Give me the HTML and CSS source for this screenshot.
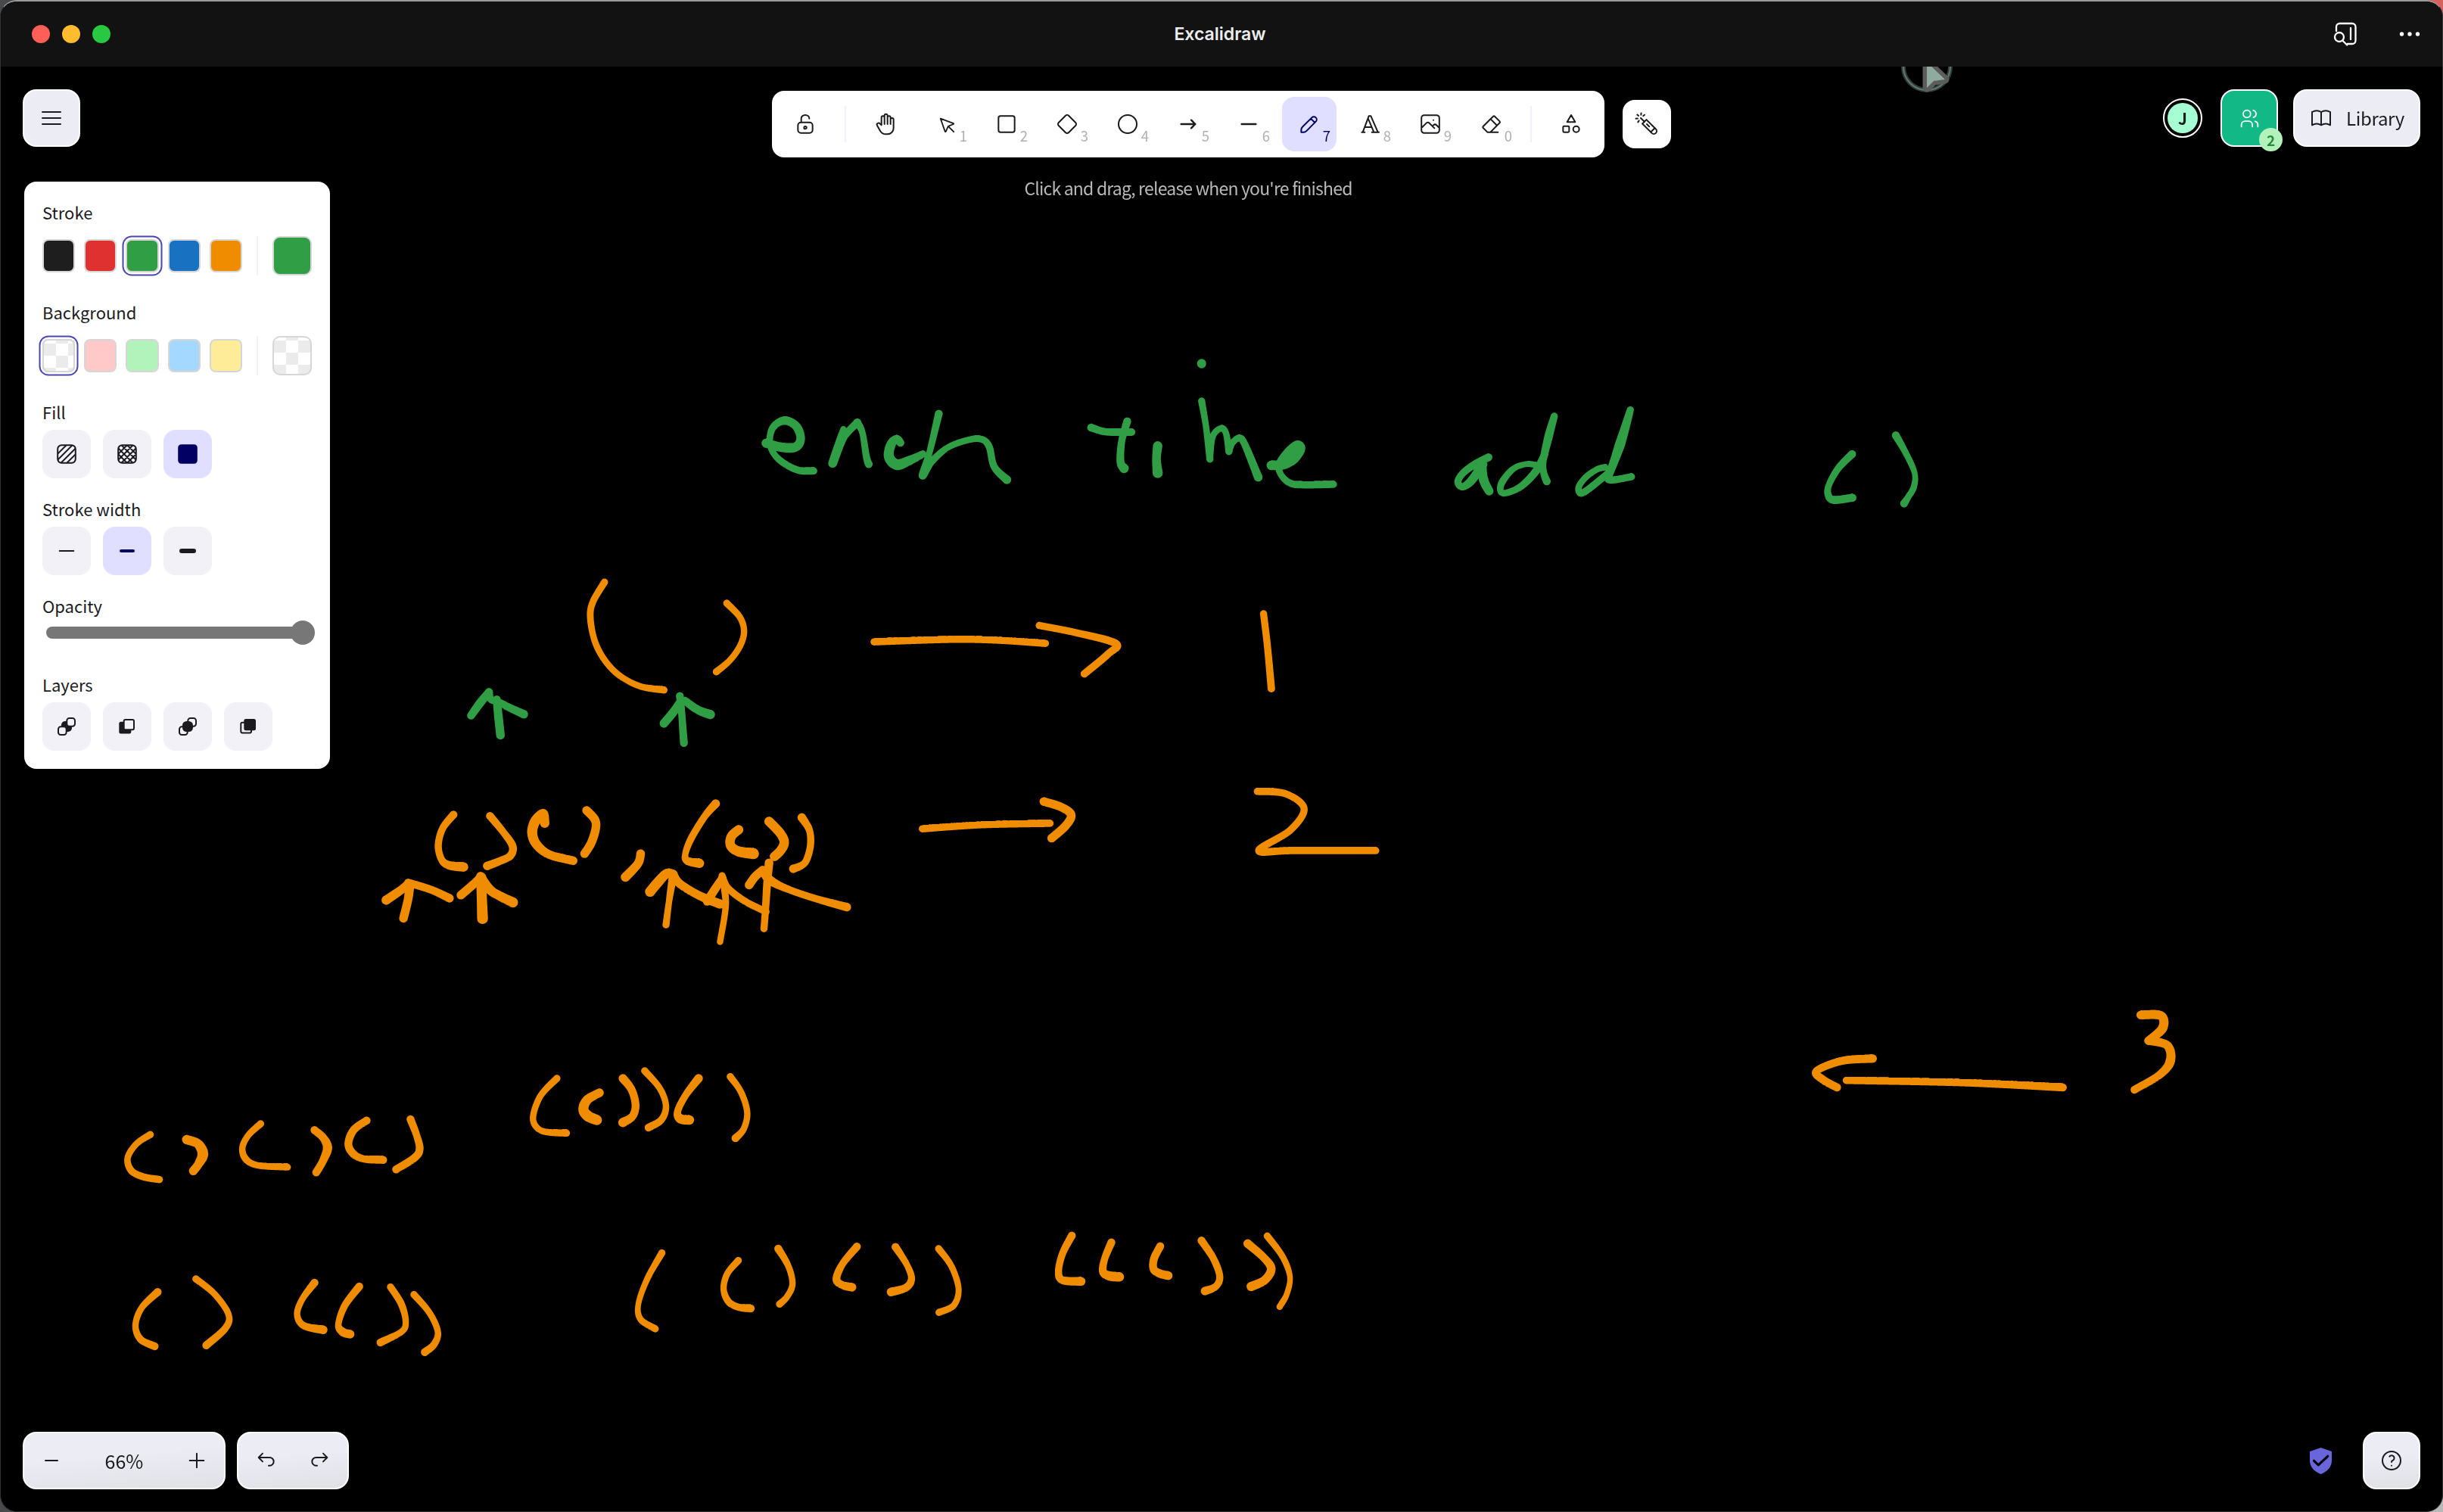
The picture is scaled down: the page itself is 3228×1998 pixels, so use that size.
FILE: index.html
```html
<!DOCTYPE html>
<html lang="en">
<head>
<meta charset="utf-8">
<title>Excalidraw</title>
<link rel="stylesheet" href="styles.css">
</head>
<body>
<div class="window">
  <header class="titlebar">
    <div class="lights"><span class="light light-close"></span><span class="light light-min"></span><span class="light light-max"></span></div>
    <div class="window-title">Excalidraw</div>
    <div class="titlebar-actions">
      <svg class="action-find" viewBox="0 0 34 34"><path d="M5 13V7.500a4.500 4.500 0 0 1 4.500-4.500H26a4.500 4.500 0 0 1 4.500 4.500v18A4.500 4.500 0 0 1 26 30h-6.500M24 9v15"/><circle cx="9" cy="21" r="6"/><path d="M13.200 25.500l6 6"/></svg>
      <svg class="action-more" viewBox="0 0 28 8"><circle cx="3.500" cy="4" r="2.700"/><circle cx="14" cy="4" r="2.700"/><circle cx="24.500" cy="4" r="2.700"/></svg>
    </div>
  </header>

  <main class="stage">
    <canvas class="board" id="board" width="3228" height="1910"></canvas>

    <div class="top">
      <div class="side-left">
        <button class="pill menu-button"><svg class="icon" viewBox="0 0 20 20"><path d="M2.500 5h15M2.500 10h15M2.500 15h15"/></svg></button>
        <section class="panel">
          <div class="field">
            <h3>Stroke</h3>
            <div class="swatches">
              <span class="swatch c-black"></span><span class="swatch c-red"></span><span class="swatch c-green selected"></span><span class="swatch c-blue"></span><span class="swatch c-orange"></span>
              <span class="rule"></span><span class="swatch large c-green"></span>
            </div>
          </div>
          <div class="field">
            <h3>Background</h3>
            <div class="swatches">
              <span class="swatch c-none selected"></span><span class="swatch c-pink"></span><span class="swatch c-mint"></span><span class="swatch c-sky"></span><span class="swatch c-sand"></span>
              <span class="rule"></span><span class="swatch large c-none"></span>
            </div>
          </div>
          <div class="field">
            <h3>Fill</h3>
            <div class="options">
              <button class="option"><svg class="icon" viewBox="0 0 20 20"><defs><clipPath id="tile"><rect x="2.625" y="2.625" width="14.750" height="14.750" rx="3.250"/></clipPath></defs><rect x="2.625" y="2.625" width="14.750" height="14.750" rx="3.250"/><path clip-path="url(#tile)" d="M2.258 15.156 15.156 2.258M7.324 20.222 20.222 7.325m-20.444 5.350L12.675-.222m-8.157 18.340L17.416 5.220"/></svg></button>
              <button class="option"><svg class="icon" viewBox="0 0 20 20"><rect x="2.625" y="2.625" width="14.750" height="14.750" rx="3.250"/><path clip-path="url(#tile)" d="M2.426 15.044 15.044 2.426M7.383 20 20 7.383M0 12.617 12.617 0m-7.980 17.941L17.256 5.324m-2.211 12.250L2.426 4.956M20 12.617 7.383 0m5.234 20L0 7.383m17.941 7.980L5.324 2.745"/></svg></button>
              <button class="option active"><svg class="icon solid" viewBox="0 0 20 20"><rect x="2.625" y="2.625" width="14.750" height="14.750" rx="2"/></svg></button>
            </div>
          </div>
          <div class="field">
            <h3>Stroke width</h3>
            <div class="options">
              <button class="option"><svg class="icon" viewBox="0 0 20 20"><path d="M4.167 10h11.666"/></svg></button>
              <button class="option active"><svg class="icon w-bold" viewBox="0 0 20 20"><path d="M5 10h10"/></svg></button>
              <button class="option"><svg class="icon w-extra" viewBox="0 0 20 20"><path d="M5 10h10"/></svg></button>
            </div>
          </div>
          <div class="field">
            <h3>Opacity</h3>
            <div class="slider"><span class="track"></span><span class="thumb"></span></div>
          </div>
          <div class="field">
            <h3>Layers</h3>
            <div class="options">
              <button class="option"><svg class="icon layer" viewBox="0 0 32 32"><rect class="dark" x="9" y="9" width="14" height="14" rx="5"/><rect class="pale" x="16.300" y="5" width="10.700" height="10.700" rx="3.300"/><rect class="pale" x="5" y="16.300" width="10.700" height="10.700" rx="3.300"/></svg></button>
              <button class="option"><svg class="icon layer" viewBox="0 0 32 32"><rect class="dark" x="5.300" y="9.800" width="16" height="15.700" rx="2.500"/><rect class="pale" x="11.700" y="7" width="13.300" height="13.300" rx="2"/></svg></button>
              <button class="option"><svg class="icon layer" viewBox="0 0 32 32"><rect class="pale" x="16.300" y="5" width="10.700" height="10.700" rx="3.300"/><rect class="pale" x="5" y="16.300" width="10.700" height="10.700" rx="3.300"/><rect class="dark" x="9" y="9" width="14" height="14" rx="5.500"/></svg></button>
              <button class="option"><svg class="icon layer" viewBox="0 0 32 32"><rect class="pale" x="6.300" y="10.800" width="13.700" height="13.700" rx="2"/><rect class="dark" x="10.300" y="6" width="15.700" height="15.300" rx="2.500"/></svg></button>
            </div>
          </div>
        </section>
      </div>

      <div class="center">
        <div class="tool-column">
          <div class="toolbar">
            <button class="tool"><svg class="icon" viewBox="0 0 20 20"><path d="M13.542 8.542H6.458a2.500 2.500 0 0 0-2.500 2.500v3.750a2.500 2.500 0 0 0 2.500 2.500h7.084a2.500 2.500 0 0 0 2.500-2.500v-3.750a2.500 2.500 0 0 0-2.500-2.500ZM10 13.958a1.042 1.042 0 1 0 0-2.083 1.042 1.042 0 0 0 0 2.083ZM6.667 8.333V5.417C6.667 3.806 8.159 2.500 10 2.500s3.333 1.306 3.333 2.917"/></svg></button>
            <span class="divider"></span>
            <button class="tool"><svg class="icon i24" viewBox="0 0 24 24"><path d="M8 13v-7.500a1.500 1.500 0 0 1 3 0v6.500M11 5.500v-2a1.500 1.500 0 1 1 3 0v8.500M14 5.500a1.500 1.500 0 0 1 3 0v6.500M17 7.500a1.500 1.500 0 0 1 3 0v8.500a6 6 0 0 1-6 6h-2h.208a6 6 0 0 1-5.012-2.700a69.740 69.740 0 0 1-.196-.300c-.312-.479-1.407-2.388-3.286-5.728a1.500 1.500 0 0 1 .536-2.022a1.867 1.867 0 0 1 2.280 .280l1.470 1.470"/></svg></button>
            <button class="tool"><svg class="icon" viewBox="0 0 22 22"><path d="M6 6l4.153 11.793a.365.365 0 0 0 .331.207a.366.366 0 0 0 .332-.207l2.184-4.793l4.787-1.994a.355.355 0 0 0 .213-.323a.355.355 0 0 0-.213-.323l-11.787-4.360zM13.500 13.500l4.500 4.500"/></svg><span class="key">1</span></button>
            <button class="tool"><svg class="icon i24" viewBox="0 0 24 24"><rect x="4" y="4" width="16" height="16" rx="2"/></svg><span class="key">2</span></button>
            <button class="tool"><svg class="icon i24" viewBox="0 0 24 24"><path d="M10.500 20.400l-6.900-6.900c-.781-.781-.781-2.219 0-3l6.900-6.900c.781-.781 2.219-.781 3 0l6.900 6.900c.781.781.781 2.219 0 3l-6.900 6.900c-.781.781-2.219.781-3 0z"/></svg><span class="key">3</span></button>
            <button class="tool"><svg class="icon i24" viewBox="0 0 24 24"><circle cx="12" cy="12" r="9"/></svg><span class="key">4</span></button>
            <button class="tool"><svg class="icon w-line" viewBox="0 0 20 20"><path d="M4.167 10h11.666M12.500 13.333 15.833 10M12.500 6.667 15.833 10"/></svg><span class="key">5</span></button>
            <button class="tool"><svg class="icon w-line" viewBox="0 0 20 20"><path d="M4.167 10h11.666"/></svg><span class="key">6</span></button>
            <button class="tool active"><svg class="icon" viewBox="0 0 20 20"><path d="m7.643 15.690 7.774-7.773a2.357 2.357 0 1 0-3.334-3.334L4.310 12.357a3.333 3.333 0 0 0-.977 2.357v1.953h1.953c.884 0 1.732-.352 2.357-.977ZM11.250 5.417l3.333 3.333"/></svg><span class="key">7</span></button>
            <button class="tool"><svg class="icon i24" viewBox="0 0 24 24"><path d="M4 20h3M14 20h7M6.900 15h6.900M10.200 6.300L16 20M5 20l6-16h2l7 16"/></svg><span class="key">8</span></button>
            <button class="tool"><svg class="icon" viewBox="0 0 20 20"><path d="M12.500 6.667h.01M4.910 2.625h10.180a2.284 2.284 0 0 1 2.285 2.284v10.182a2.284 2.284 0 0 1-2.284 2.284H4.909a2.284 2.284 0 0 1-2.284-2.284V4.909a2.284 2.284 0 0 1 2.284-2.284ZM3.333 12.500l3.334-3.333c.773-.745 1.726-.745 2.500 0l4.166 4.166M11.667 11.667l.833-.834c.774-.744 1.726-.744 2.500 0l1.667 1.667"/></svg><span class="key">9</span></button>
            <button class="tool"><svg class="icon i24" viewBox="0 0 24 24"><path d="M19 20h-10.500l-4.210-4.300a1 1 0 0 1 0-1.410l10-10a1 1 0 0 1 1.410 0l5 5a1 1 0 0 1 0 1.410l-9.200 9.300M18 13.300l-6.300-6.300"/></svg><span class="key">0</span></button>
            <span class="divider"></span>
            <button class="tool"><svg class="icon i24" viewBox="0 0 24 24"><path d="M12 3l-4 7h8zM14 17a3 3 0 1 0 6 0a3 3 0 1 0-6 0M4 15a1 1 0 0 1 1-1h4a1 1 0 0 1 1 1v4a1 1 0 0 1-1 1h-4a1 1 0 0 1-1-1z"/></svg></button>
          </div>
          <p class="hint">Click and drag, release when you're finished</p>
        </div>
        <button class="laser"><svg class="icon" viewBox="0 0 20 20"><g transform="rotate(90 10 10)"><path d="m9.644 13.690 7.774-7.773a2.357 2.357 0 0 0-3.334-3.334l-7.773 7.774L8 12l1.643 1.690Z"/><path d="m13.250 3.417 3.333 3.333M10 10l2-2M5 15l3-3M2.156 17.894l1-1M5.453 19.029l-.144-1.407M2.377 11.887l.866 1.118M8.354 17.273l-1.194-.758M.953 14.652l1.408.130"/></g></svg></button>
      </div>

      <div class="side-right">
        <div class="avatar"><span>J</span></div>
        <button class="pill share"><svg class="icon i24 users" viewBox="0 0 24 24"><path d="M5 7a4 4 0 1 0 8 0a4 4 0 1 0-8 0M3 21v-2a4 4 0 0 1 4-4h4a4 4 0 0 1 4 4v2M16 3.130a4 4 0 0 1 0 7.750M21 21v-2a4 4 0 0 0-3-3.850"/></svg><span class="badge">2</span></button>
        <button class="pill library"><svg class="icon i24" viewBox="0 0 24 24"><path d="M3 19a9 9 0 0 1 9 0a9 9 0 0 1 9 0M3 6a9 9 0 0 1 9 0a9 9 0 0 1 9 0M3 6v13M12 6v13M21 6v13"/></svg><span>Library</span></button>
      </div>
    </div>

    <footer class="footer">
      <div class="pill zoom"><svg class="icon" viewBox="0 0 20 20"><path d="M5 10h10"/></svg><span>66%</span><svg class="icon" viewBox="0 0 20 20"><path d="M10 4.167v11.666M4.167 10h11.666"/></svg></div>
      <div class="pill history"><svg class="icon" viewBox="0 0 20 20"><path d="M7.500 10.833 4.167 7.500 7.500 4.167M4.167 7.500h9.166a3.333 3.333 0 0 1 0 6.667H12.500"/></svg><svg class="icon" viewBox="0 0 20 20"><path d="M12.500 10.833 15.833 7.500 12.500 4.167M15.833 7.500H6.667a3.333 3.333 0 1 0 0 6.667H7.500"/></svg></div>
      <svg class="shield" viewBox="0 0 29 35"><path class="shield-body" d="M14.500 0L29 5v12c0 8-5.500 14.500-14.500 18C5.500 31.500 0 25 0 17V5z"/><path class="shield-check" d="M5.500 17.300l5.800 5.600L23.700 11.300"/></svg>
      <button class="pill help"><svg class="icon i24" viewBox="0 0 24 24"><circle cx="12" cy="12" r="9"/><path d="M12 17v.01M12 13.500a1.500 1.500 0 0 1 1-1.500a2.600 2.600 0 1 0-3-4"/></svg></button>
    </footer>
  </main>
</div>
<script src="board.js"></script>
</body>
</html>
```
FILE: styles.css
```css
* { box-sizing: border-box; }
body {
  margin: 0;
  width: 3228px;
  height: 1998px;
  overflow: hidden;
  background: linear-gradient(to bottom, #d9605c 40px, transparent 40px) right top / 60px 60px no-repeat, linear-gradient(100deg, #47494b 0 60%, #b8b8b8 80%);
  font-family: "Noto Sans CJK SC", "Noto Sans", sans-serif;
  color: #1b1b1f;
}
button { font: inherit; color: inherit; border: 0; padding: 0; margin: 0; background: none; }
h3, p { margin: 0; font-weight: 400; }

.window {
  height: 1998px;
  display: flex;
  flex-direction: column;
  border: 1px solid #333;
  border-top: 2px solid #9a9b9c;
  border-bottom-color: #2b2b2b;
  border-radius: 22px;
  overflow: hidden;
  background: #000;
}
.titlebar {
  flex: none;
  height: 86px;
  padding: 0 29px 0 41px;
  display: grid;
  grid-template-columns: 1fr auto 1fr;
  align-items: center;
  background: #121212;
}
.lights { display: flex; gap: 16px; }
.light { width: 24px; height: 24px; border-radius: 50%; }
.light-close { background: #ff5f57; }
.light-min { background: #febc2e; }
.light-max { background: #28c840; }
.window-title { font: 600 23px/30px Inter, sans-serif; color: #ececec; margin-right: 16px; }
.titlebar-actions { display: flex; justify-content: flex-end; align-items: center; gap: 54px; }
.titlebar-actions svg { fill: none; stroke: #fff; stroke-width: 2.300; stroke-linecap: round; }
.action-find { width: 34px; height: 34px; }
.action-more { width: 28px; height: 8px; }
.titlebar-actions .action-more { fill: #fff; stroke: none; }

.stage { position: relative; flex: 1; display: flex; flex-direction: column; justify-content: space-between; padding: 30px 29px 29px; }
.board { position: absolute; left: -1px; top: 0; }
.top, .footer { position: relative; display: flex; }
.top { display: grid; grid-template-columns: 1fr auto 1fr; align-items: start; }

.icon { width: 32px; height: 32px; fill: none; stroke: currentColor; stroke-width: 1.250; stroke-linecap: round; stroke-linejoin: round; display: block; flex: none; }
.i24 { stroke-width: 1.500; }
.w-line { stroke-width: 1.500; }
.w-bold { stroke-width: 2.500; }
.w-extra { stroke-width: 3.750; }
.solid { fill: currentColor; }
.layer { stroke-width: 2; }
.layer .dark { fill: currentColor; stroke: none; }
.layer .pale { fill: #f2f1f7; }

.pill {
  position: relative;
  height: 76px;
  display: flex;
  align-items: center;
  justify-content: center;
  border: 2px solid #fff;
  border-radius: 18px;
  background: #ececf4;
}
.menu-button { width: 76px; }
.side-left { display: flex; flex-direction: column; gap: 46px; }

.panel { width: 404px; margin-left: 2px; padding: 24px; border-radius: 16px; background: #fff; display: flex; flex-direction: column; gap: 24px; }
.field h3 { font-size: 22px; line-height: 32px; margin-bottom: 8px; }
.swatches { height: 68px; display: flex; align-items: center; gap: 12px; }
.swatch { width: 43.200px; height: 43.200px; border: 2px solid #d6d6d6; border-radius: 8px; flex: none; }
.swatch.selected { box-shadow: 0 0 0 2.500px #fff, 0 0 0 4.500px #4a47b1; }
.swatch.large { width: 52px; height: 52px; border-radius: 10px; }
.rule { width: 2px; height: 52px; margin: 0 6.500px 0 7.500px; background: #f1f0ff; flex: none; }
.c-black { background: #1e1e1e; }
.c-red { background: #e03131; }
.c-green { background: #2f9e44; }
.c-blue { background: #1971c2; }
.c-orange { background: #f08c00; }
.c-pink { background: #ffc9c9; }
.c-mint { background: #b2f2bb; }
.c-sky { background: #a5d8ff; }
.c-sand { background: #ffec99; }
.c-none { background: conic-gradient(#fff 25%, #ebebeb 0 50%, #fff 0 75%, #ebebeb 0) 0 4px / 32px 32px; }
.options { display: flex; gap: 16px; }
.option { width: 64px; height: 64px; border-radius: 16px; background: #f2f1f7; display: flex; align-items: center; justify-content: center; }
.option.active, .tool.active { background: #e0dfff; color: #030064; }
.slider { display: flex; align-items: center; height: 32px; margin: -4px 0 12px; padding-left: 5px; }
.track { width: 331px; height: 16px; border-radius: 8px 0 0 8px; background: #777; flex: none; }
.thumb { width: 32px; height: 32px; margin-left: -8px; border-radius: 50%; background: #777; flex: none; }

.center { display: flex; gap: 24px; margin-top: 2px; }
.tool-column { display: flex; flex-direction: column; align-items: center; gap: 22px; }
.toolbar { width: 1100px; height: 88px; padding: 8px; display: flex; align-items: center; gap: 8px; border-radius: 16px; background: #fff; }
.tool { position: relative; width: 72px; height: 72px; border-radius: 16px; display: flex; align-items: center; justify-content: center; flex: none; }
.divider { width: 2px; height: 48px; margin: 0 8px; background: #f1f0ff; flex: none; }
.key { position: absolute; right: 8px; bottom: 9px; font-size: 18.500px; line-height: 24px; color: #b0b0b0; }
.active .key { color: #030064; }
.hint { font-size: 23px; line-height: 36px; letter-spacing: -0.800px; color: #b8b8b8; }
.laser { width: 64px; height: 64px; margin-top: 12px; border-radius: 16px; background: #fff; display: flex; align-items: center; justify-content: center; }

.side-right { display: flex; justify-content: flex-end; align-items: center; gap: 20px; }
.avatar { width: 52px; height: 52px; border: 2.500px solid #fff; border-radius: 50%; display: flex; align-items: center; justify-content: center; margin-right: 4px; }
.avatar span { width: 40px; height: 40px; border-radius: 50%; background: #a6ffd2; font-size: 21px; font-weight: 700; line-height: 40px; text-align: center; }
.share { width: 76px; background: #12b886; color: #fff; }
.users { width: 29px; height: 29px; }
.badge { position: absolute; right: -8px; bottom: -8px; width: 31px; height: 31px; border-radius: 50%; background: #b2f2bb; color: #2b8a3e; font-size: 19px; font-weight: 700; line-height: 31px; text-align: center; }
.library { width: 168px; gap: 17px; font-size: 24px; line-height: 36px; letter-spacing: -0.300px; }

.footer { align-items: center; }
.footer .pill { background: linear-gradient(175deg, #ececf4 40%, #e0e0e7); }
.zoom { width: 268px; justify-content: space-between; padding: 0 20px; font-size: 25px; margin-right: 15px; }
.history { width: 148px; gap: 40px; }
.shield { width: 29px; height: 35px; margin-left: auto; margin-right: 41px; }
.shield-body { fill: #6965db; }
.shield-check { fill: none; stroke: #000; stroke-width: 3.200; stroke-linecap: round; stroke-linejoin: round; }
.help { width: 76px; }
```
FILE: board.js
```js
// Freehand scene. Each group has an origin and a scale; each stroke is a list
// of x, y, width triples, with the width in board pixels.
const GREEN = '#2f9e44';
const ORANGE = '#f08c00';
const TOP = 88;
const INK_SPREAD = 0.5;

const groups = [
  { color: GREEN, ox: 980, oy: 450, sx: 1.912, sy: 3, strokes: [
    [62,407,12, 100,423,12, 135,423,12, 149,390,11, 138,340,11, 108,317,11, 79,345,9, 71,400,8, 82,450,8, 110,490,9, 145,515,9, 182,517,9],
    [257,352,8, 242,420,9, 230,487,11, 258,385,9, 292,325,10],
    [292,325,10, 305,365,8, 315,460,9, 321,490,10],
    [401,405,10, 392,390,10, 378,410,12, 372,460,13, 392,492,14, 425,475,12, 458,450,9],
    [498,290,10, 475,440,8, 457,535,10, 480,480,9, 520,425,8, 570,395,8, 605,391,8.5, 625,420,9, 638,500,9, 670,552,11],
    [974,320,10, 960,400,9, 957,480,10, 966,507,12],
    [883,345,10, 920,362,9, 985,363,9.5],
    [1051,418,12, 1048,470,11, 1051,525,13],
    [1162,91,11.5, 1162,92,11.5],
    [1162,240,9, 1173,340,8, 1183,470,9],
    [1183,470,8, 1190,380,8, 1212,348,8, 1224,370,8, 1231,440,9],
    [1231,440,8, 1240,405,8, 1258,387,9, 1272,415,9, 1305,542,11],
    [1338,495,12, 1370,492,12, 1395,470,12, 1412,430,12, 1403,415,12, 1380,445,12, 1358,490,9, 1362,530,8, 1385,565,9, 1420,572,9, 1495,570,9],
  ]},
  { color: GREEN, ox: 1800, oy: 500, sx: 2.010, sy: 3, strokes: [
    [335,313,10, 300,340,10, 268,375,9, 254,410,9, 266,430,9, 290,405,11, 320,340,12],
    [320,340,9, 322,400,12, 337,447,11],
    [468,345,8, 435,340,7, 400,360,8, 372,410,9, 367,445,8, 380,455,8, 420,430,9, 460,370,10, 485,300,9],
    [510,150,9, 495,230,11, 480,330,9, 482,375,9, 490,408,10],
    [645,352,8, 625,360,8, 595,390,8, 575,430,8, 580,455,9, 600,440,9, 650,380,9],
    [712,125,9, 685,260,13, 655,385,9],
    [655,360,8, 655,402,9, 715,390,9],
    [1301,300,10, 1265,355,9, 1240,420,8, 1237,460,9, 1252,482,10, 1302,473,10],
    [1417,226,10, 1445,300,8, 1467,375,7, 1465,430,8, 1450,470,8, 1439,496,10],
  ]},
  { color: GREEN, ox: 480, oy: 740, sx: 2.24, sy: 2.904, strokes: [
    [319,597,10, 345,550,11, 372,507,10],
    [372,507,10, 378,535,9, 400,545,9, 430,565,10, 475,592,11],
    [395,535,10, 400,600,11, 406,672,11],
    [890,627,11, 920,580,11, 940,540,10],
    [937,522,10, 942,580,9, 946,650,9.5, 949,702,10],
    [952,540,10, 990,575,11, 1027,593,12],
  ]},
  { color: ORANGE, ox: 480, oy: 740, sx: 2.24, sy: 2.904, strokes: [
    [714,85,9, 680,160,8.5, 672,220,8.5, 685,310,8, 715,385,8, 760,445,8, 820,485,8, 890,499,9],
    [1076,166,9, 1115,220,8, 1127,275,8, 1115,330,8, 1085,385,8, 1045,429,9],
    [267,977,10, 235,1030,9, 222,1095,9, 232,1150,9, 255,1172,11, 297,1178,12],
    [375,982,10, 415,1045,9, 442,1098,10, 435,1135,10, 405,1155,10, 367,1174,11],
    [537,1010,12, 533,972,11, 510,1000,13, 500,1045,13, 512,1090,12, 550,1130,11, 621,1154,11],
    [661,961,11, 685,995,11, 688,1030,11, 675,1085,11, 655,1127,11],
    [821,1127,11, 813,1165,11, 776,1217,12],
    [1043,935,11, 1010,985,9, 970,1070,9, 953,1130,8, 960,1155,10, 995,1164,12],
    [1111,1035,12, 1090,1060,12, 1087,1095,12, 1110,1118,13, 1155,1127,14],
    [1201,1003,12, 1235,1050,12, 1246,1085,12, 1235,1115,12, 1217,1138,12],
    [1298,988,11, 1320,1035,9, 1324,1090,9, 1314,1145,9, 1300,1170,9, 1273,1185,11],
    [68,1305,12, 110,1268,11, 133,1245,12], [133,1238,10, 200,1265,10, 255,1298,11],
    [137,1250,12, 133,1300,11, 119,1375,11],
    [289,1286,11, 330,1240,11, 347,1218,11], [347,1213,11, 375,1265,12, 405,1290,12, 443,1314,13],
    [349,1218,13, 351,1300,13, 353,1376,14],
    [849,1273,13, 870,1240,13, 897,1204,12, 917,1205,11], [917,1205,11, 935,1240,11, 990,1285,11, 1055,1320,12],
    [917,1210,11, 905,1310,8, 896,1400,9],
    [1018,1310,11, 1040,1265,11, 1063,1220,10], [1063,1220,10, 1080,1260,9, 1130,1310,9, 1192,1350,9],
    [1018,1305,11, 1068,1325,9],
    [1062,1212,9, 1070,1270,9, 1072,1340,8, 1056,1465,8],
    [1142,1247,11, 1160,1215,11, 1182,1190,11], [1185,1195,11, 1205,1230,12, 1260,1265,9, 1340,1300,9, 1431,1332,11],
    [1201,1162,11, 1195,1250,10, 1190,1350,9, 1186,1415,9],
  ]},
  { color: ORANGE, ox: 140, oy: 1380, sx: 1.742, sy: 3, strokes: [
    [102,358,9, 70,395,8, 50,450,8, 58,500,9, 85,525,9, 123,536,9],
    [186,378,12, 212,395,12, 223,435,14, 213,475,11, 201,502,11],
    [356,315,9, 328,360,8, 314,410,8, 322,455,9, 350,480,8, 418,487,8.5],
    [480,340,10, 500,370,10, 510,410,12, 500,460,10, 484,508,10],
    [600,302,10, 570,340,10, 558,395,10, 570,435,10, 595,455,9, 638,458,10],
    [701,297,10, 715,360,9, 722,415,10, 710,450,10, 668,496,10],
    [1038,135,9, 1000,205,8, 983,290,8, 995,335,8, 1020,349,8, 1060,352,9],
    [1136,192,11, 1108,220,12, 1099,258,13, 1110,285,14, 1130,300,13],
    [1190,135,11, 1210,180,10, 1219,240,10, 1212,285,10, 1190,310,12],
    [1240,105,9, 1275,175,8, 1289,245,8, 1278,300,9, 1249,330,10],
    [1364,135,11, 1335,200,9, 1316,265,9, 1322,295,12, 1343,300,12],
    [1437,128,9, 1462,190,8, 1476,270,8, 1468,335,8, 1449,372,10],
    [119,982,10, 82,1045,8, 68,1115,8, 80,1170,9, 112,1197,10],
    [207,930,9, 250,990,8, 282,1070,8, 275,1125,9, 231,1193,10],
    [480,945,10, 452,1010,8, 440,1070,8, 455,1115,9, 500,1132,11],
    [583,960,10, 550,1035,9, 535,1110,8, 545,1140,11, 562,1149,11],
    [655,962,9, 680,1030,9, 690,1100,8, 680,1140,8, 632,1182,10],
    [709,992,9, 745,1065,8, 764,1140,8, 755,1190,9, 734,1220,10],
  ]},
  { color: ORANGE, ox: 820, oy: 1600, sx: 1.704, sy: 3, strokes: [
    [93,167,9, 60,270,7.5, 40,370,7, 45,430,8, 78,468,9],
    [265,197,9, 240,250,8, 232,310,8, 243,360,9, 265,382,9, 293,387,10],
    [355,150,10, 378,220,8, 387,290,8, 375,340,8, 358,370,9],
    [532,142,10, 500,210,9, 486,270,10, 500,295,10, 521,303,11],
    [619,143,10, 645,215,8, 655,270,9, 642,305,10, 609,322,11],
    [716,150,9, 745,220,8, 761,310,7.5, 750,375,8, 717,403,9],
    [1016,98,10, 995,170,9, 986,240,9, 995,275,10, 1037,280,11],
    [1105,125,10, 1090,190,9, 1086,240,10, 1100,258,12, 1123,262,12],
    [1215,140,10, 1201,190,10, 1200,230,10, 1213,248,11, 1233,257,11],
    [1308,118,10, 1335,190,9, 1349,260,9, 1340,300,9, 1316,318,11],
    [1412,130,11, 1448,185,10, 1465,230,11, 1450,275,11, 1420,300,12],
    [1456,100,9, 1490,180,8, 1507,260,7, 1500,330,7, 1484,380,8],
  ]},
  { color: ORANGE, ox: 0, oy: 0, sx: 0.48575, sy: 0.48575, strokes: [
    [561,412,9, 610,410.5,8.5, 640,411,8.5, 671,413,9],
    [667,401.5,9, 690,406,9, 716,413,10, 711,420,9.5, 696,432.5,9.5],
    [811,394,9, 813.5,415,9, 816,442,9.5],
    [592,532,9, 630,529.5,8.5, 674,528.5,9],
    [670,514.5,11, 681,518,11, 687.5,523,11, 684,530,11, 675,538,11],
    [807,508,9, 825,509.5,9, 837,519,9, 828,533,9, 808,546,9.5, 830,546,9, 883,546,9],
    [1324,698,10, 1260,695,9, 1185,693.5,9],
    [1202,679.5,10.5, 1182,681,10, 1166,687.5,10, 1170,693,10.5, 1179,698,10.5],
    [1374,651.5,11, 1387,652,11.5, 1388,660,12, 1379,668,10.5],
    [1379,668,10.5, 1391,671,11, 1393,681,12, 1386,690,10, 1370,699.5,10],
  ]},
];

const ctx = document.getElementById('board').getContext('2d');
ctx.translate(0, -TOP);

function spline(a, b, c, d, t) {
  return 0.5 * (2 * b + (c - a) * t + (2 * a - 5 * b + 4 * c - d) * t * t + (3 * b - a - 3 * c + d) * t * t * t);
}

function drawStroke(flat, g) {
  const pts = [];
  for (let i = 0; i < flat.length; i += 3) {
    pts.push([g.ox + flat[i] / g.sx, g.oy + flat[i + 1] / g.sy, flat[i + 2] + INK_SPREAD]);
  }
  ctx.beginPath();
  for (let i = 0; i < pts.length - 1; i++) {
    const p0 = pts[Math.max(i - 1, 0)], p1 = pts[i], p2 = pts[i + 1], p3 = pts[Math.min(i + 2, pts.length - 1)];
    const steps = Math.max(2, Math.ceil(Math.hypot(p2[0] - p1[0], p2[1] - p1[1]) * 2));
    for (let s = 0; s <= steps; s++) {
      const t = s / steps;
      const x = spline(p0[0], p1[0], p2[0], p3[0], t);
      const y = spline(p0[1], p1[1], p2[1], p3[1], t);
      const r = (p1[2] + (p2[2] - p1[2]) * t) / 2;
      ctx.moveTo(x + r, y);
      ctx.arc(x, y, r, 0, Math.PI * 2);
    }
  }
  ctx.fill();
}

for (const g of groups) {
  ctx.fillStyle = g.color;
  g.strokes.forEach((s) => drawStroke(s, g));
}

// Idle collaborator pointer, partly behind the title bar.
ctx.strokeStyle = '#333d39';
ctx.lineWidth = 6;
ctx.beginPath();
ctx.arc(2546, 88, 31, 0, Math.PI * 2);
ctx.stroke();
ctx.strokeStyle = '#5d7a70';
ctx.lineWidth = 2;
ctx.stroke();
ctx.beginPath();
ctx.moveTo(2546, 82);
ctx.lineTo(2546, 116);
ctx.lineTo(2555, 107);
ctx.lineTo(2570, 105);
ctx.closePath();
ctx.lineJoin = 'round';
ctx.strokeStyle = '#5c5c5c';
ctx.lineWidth = 11;
ctx.stroke();
ctx.fillStyle = '#8fab9f';
ctx.fill();
```
